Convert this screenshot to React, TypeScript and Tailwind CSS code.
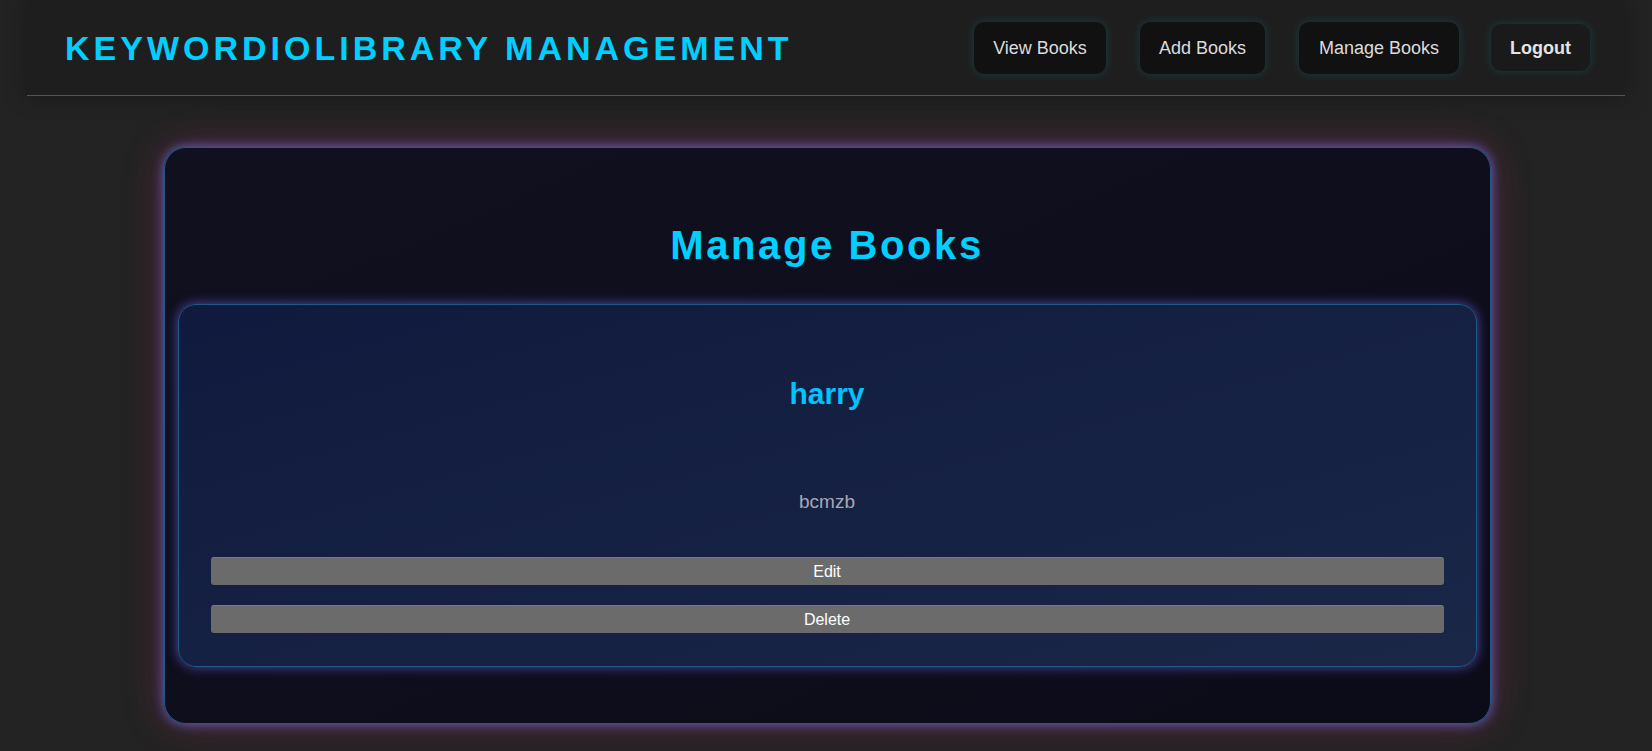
import React from "react";

const font = { fontFamily: '"Liberation Sans", Arial, sans-serif' };

function NavButton({ label, w, bold }: { label: string; w: string; bold?: boolean }) {
  return (
    <button
      className={
        bold
          ? `${w} h-[47px] rounded-[10px] bg-[#1a1a1a] text-[#e4e4e4] text-[18px] font-bold leading-[22px] shadow-[0_0_9px_rgba(0,200,220,0.2)]`
          : `${w} h-[52px] rounded-[10px] bg-[#111111] text-[#dcdcdc] text-[18px] leading-[22px] shadow-[0_0_9px_rgba(0,200,220,0.2)]`
      }
    >
      {label}
    </button>
  );
}

export default function App() {
  return (
    <div className="min-h-[751px] bg-[#232323] overflow-hidden" style={font}>
      <header className="mx-[27px] h-[96px] flex items-center justify-between pl-[38px] pr-[35px] bg-[#1e1e1e] border-b border-[#555555] shadow-[0_0_20px_rgba(0,0,0,0.35)]">
        <h1 className="text-[34px] font-bold tracking-[4px] text-[#00cfff] leading-[40px]">
          KEYWORDIOLIBRARY MANAGEMENT
        </h1>
        <nav className="flex items-center">
          <NavButton label="View Books" w="w-[132px]" />
          <div className="ml-[34px]">
            <NavButton label="Add Books" w="w-[125px]" />
          </div>
          <div className="ml-[34px]">
            <NavButton label="Manage Books" w="w-[160px]" />
          </div>
          <div className="ml-[32px]">
            <NavButton label="Logout" w="w-[99px]" bold />
          </div>
        </nav>
      </header>

      <main className="pt-[51px] pb-[40px] flex justify-center">
        <section className="w-[1327px] translate-x-[1px] rounded-[22px] border border-[#23588a] bg-gradient-to-br from-[#10101f] to-[#0c0c19] pt-[74px] pb-[56px] px-[13px] shadow-[0_0_12px_rgba(110,110,230,0.85),0_0_40px_rgba(210,40,120,0.3)]">
          <h2 className="text-center text-[40px] font-bold leading-[46px] tracking-[2.6px] text-[#00cfff] mb-[36px]">
            Manage Books
          </h2>
          <div className="rounded-[18px] border border-[#1f5a86] bg-gradient-to-br from-[#101a3e] to-[#1a2747] pt-[72px] pb-[33px] px-[32px] shadow-[0_0_12px_rgba(110,100,230,0.7)]">
            <h3 className="text-center text-[30px] font-bold leading-[34px] text-[#00c3ff]">
              harry
            </h3>
            <p className="text-center text-[19px] leading-[22px] text-[#a8a8b4] mt-[80px]">
              bcmzb
            </p>
            <button className="mt-[44px] w-full h-[28px] rounded-[3px] bg-[#6b6b6b] text-white text-[16px] leading-[18px] border-t border-[#7a7a7a]">
              Edit
            </button>
            <button className="mt-[20px] w-full h-[28px] rounded-[3px] bg-[#6b6b6b] text-white text-[16px] leading-[18px] border-t border-[#7a7a7a]">
              Delete
            </button>
          </div>
        </section>
      </main>
    </div>
  );
}
